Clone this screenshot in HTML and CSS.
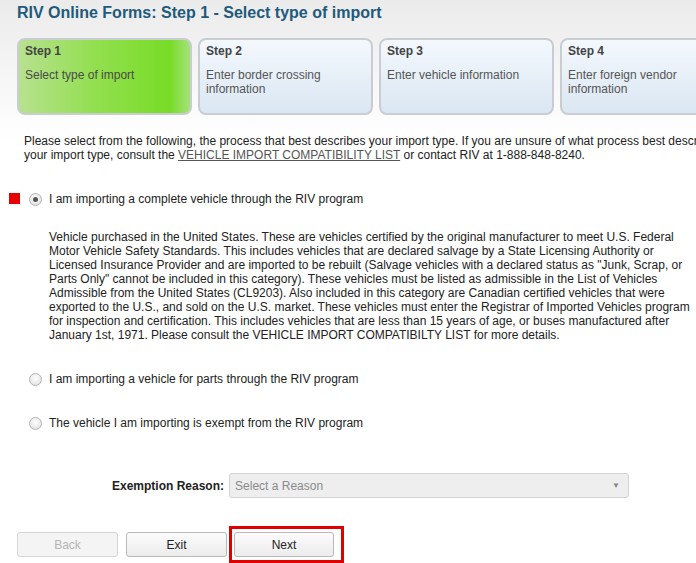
FILE: index.html
```html
<!DOCTYPE html>
<html lang="en">
<head>
    <meta charset="UTF-8">
    <title>RIV Online Forms: Step 1 - Select type of import</title>
    <link rel="stylesheet" href="styles.css">
</head>
<body>
    <div class="page">
        <h1 class="page-title">RIV Online Forms: Step 1 - Select type of import</h1>

        <div class="steps">
            <div class="step step-active">
                <div class="step-num">Step 1</div>
                <div class="step-desc">Select type of import</div>
            </div>
            <div class="step">
                <div class="step-num">Step 2</div>
                <div class="step-desc">Enter border crossing information</div>
            </div>
            <div class="step">
                <div class="step-num">Step 3</div>
                <div class="step-desc">Enter vehicle information</div>
            </div>
            <div class="step">
                <div class="step-num">Step 4</div>
                <div class="step-desc">Enter foreign vendor information</div>
            </div>
        </div>

        <p class="intro">Please select from the following, the process that best describes your import type. If you are unsure of what process best describes your import type, consult the <a href="#">VEHICLE IMPORT COMPATIBILITY LIST</a> or contact RIV at 1-888-848-8240.</p>

        <div class="option option-first">
            <span class="marker"></span>
            <span class="radio radio-checked"></span>
            <span class="option-label">I am importing a complete vehicle through the RIV program</span>
        </div>

        <p class="option-info">Vehicle purchased in the United States. These are vehicles certified by the original manufacturer to meet U.S. Federal Motor Vehicle Safety Standards. This includes vehicles that are declared salvage by a State Licensing Authority or Licensed Insurance Provider and are imported to be rebuilt (Salvage vehicles with a declared status as "Junk, Scrap, or Parts Only" cannot be included in this category). These vehicles must be listed as admissible in the List of Vehicles Admissible from the United States (CL9203). Also included in this category are Canadian certified vehicles that were exported to the U.S., and sold on the U.S. market. These vehicles must enter the Registrar of Imported Vehicles program for inspection and certification. This includes vehicles that are less than 15 years of age, or buses manufactured after January 1st, 1971. Please consult the VEHICLE IMPORT COMPATIBILTY LIST for more details.</p>

        <div class="option">
            <span class="radio"></span>
            <span class="option-label">I am importing a vehicle for parts through the RIV program</span>
        </div>

        <div class="option">
            <span class="radio"></span>
            <span class="option-label">The vehicle I am importing is exempt from the RIV program</span>
        </div>

        <div class="reason-row">
            <label class="reason-label">Exemption Reason:</label>
            <div class="reason-select">
                <span>Select a Reason</span>
                <span class="arrow">&#9660;</span>
            </div>
        </div>

        <div class="buttons">
            <button class="btn btn-disabled">Back</button>
            <button class="btn">Exit</button>
            <div class="highlight">
                <button class="btn">Next</button>
            </div>
        </div>
    </div>
</body>
</html>
```

FILE: styles.css
```css
html {
    overflow: hidden;
}
body {
    margin: 0;
    font-family: "Liberation Sans", Arial, sans-serif;
    font-size: 12px;
    color: #222;
    background: linear-gradient(#ebebeb 0, #ffffff 140px) no-repeat;
    background-color: #fff;
}
.page {
    width: 760px;
    padding-left: 17px;
}
.page-title {
    margin: 0;
    padding-top: 3px;
    font-size: 16px;
    line-height: 19px;
    color: #1e5a7c;
}
.steps {
    display: flex;
    gap: 6px;
    margin-top: 16px;
}
.step {
    box-sizing: border-box;
    width: 175px;
    height: 77px;
    padding: 4px 6px;
    border: 2px solid #c9cdd1;
    border-radius: 8px;
    background: linear-gradient(#f3f8fd, #dbe7f3);
    color: #555;
}
.step-active {
    background: linear-gradient(to right, #b7e18f 0%, #92df4f 45%, #78dc26 88%, #a5e27a 100%);
    color: #4a4a4a;
}
.step-num {
    font-weight: bold;
    color: #444;
    line-height: 14px;
}
.step-desc {
    margin-top: 10px;
    line-height: 14px;
}
.intro {
    margin: 19px 0 0 7px;
    width: 712px;
    line-height: 14px;
    color: #222;
}
.intro a {
    color: #555;
}
.option {
    position: relative;
    display: flex;
    align-items: center;
    margin-top: 28px;
    padding-left: 12px;
    height: 16px;
}
.option-first {
    margin-top: 29px;
}
.marker {
    position: absolute;
    left: -8px;
    top: 2px;
    width: 11px;
    height: 11px;
    background: #e60000;
}
.radio {
    box-sizing: border-box;
    width: 13px;
    height: 13px;
    border-radius: 50%;
    border: 1px solid #b4b4b4;
    background: radial-gradient(circle at 50% 40%, #ffffff 0, #e6e6e6 70%, #d2d2d2 100%);
    display: flex;
    align-items: center;
    justify-content: center;
}
.radio-checked::after {
    content: "";
    width: 5px;
    height: 5px;
    border-radius: 50%;
    background: #555;
}
.option-label {
    margin-left: 7px;
    color: #222;
}
.option-info {
    margin: 23px 0 0 32px;
    width: 648px;
    line-height: 14px;
    color: #222;
}
.option-info + .option {
    margin-top: 29px;
}
.reason-row {
    display: flex;
    align-items: center;
    margin-top: 42px;
    padding-left: 95px;
}
.reason-label {
    font-weight: bold;
    color: #222;
}
.reason-select {
    box-sizing: border-box;
    display: flex;
    justify-content: space-between;
    align-items: center;
    width: 400px;
    height: 25px;
    margin-left: 5px;
    padding: 0 8px 0 5px;
    border: 1px solid #d2d2d2;
    border-radius: 3px;
    background: #eeeeee;
    color: #8a8a8a;
}
.arrow {
    font-size: 8px;
    color: #888;
}
.buttons {
    display: flex;
    align-items: center;
    margin-top: 28px;
}
.btn {
    box-sizing: border-box;
    width: 101px;
    height: 25px;
    margin-right: 8px;
    border: 1px solid #b9b9b9;
    border-radius: 3px;
    background: linear-gradient(#fbfbfb, #ececec);
    font-family: "Liberation Sans", Arial, sans-serif;
    font-size: 12px;
    color: #222;
}
.btn-disabled {
    border-color: #d6d6d6;
    background: #f4f4f4;
    color: #b5b5b5;
}
.highlight {
    box-sizing: border-box;
    width: 115px;
    height: 37px;
    margin-left: -6px;
    padding: 3px 0 0 2px;
    border: 3px solid #e00000;
}
.highlight .btn {
    margin: 0;
    width: 100px;
}
```
